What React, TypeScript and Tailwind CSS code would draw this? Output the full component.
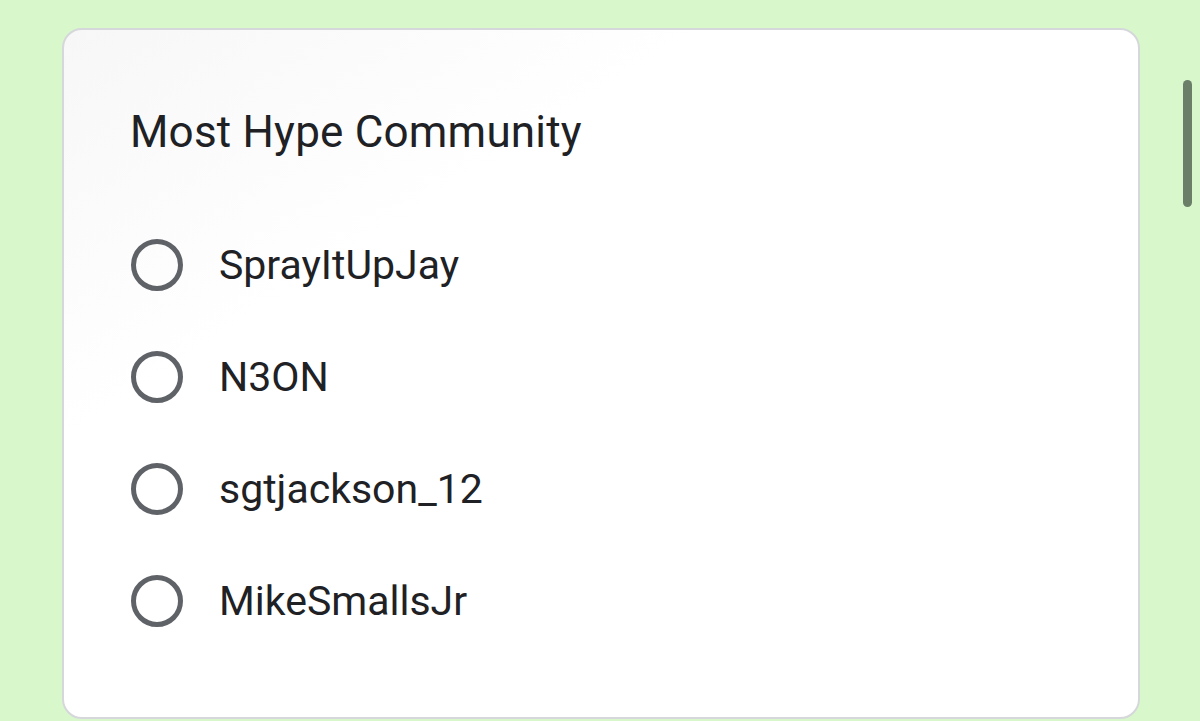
import React from "react";

const options = ["SprayItUpJay", "N3ON", "sgtjackson_12", "MikeSmallsJr"];

export default function App() {
  return (
    <div
      className="w-[1200px] h-[721px] bg-[#d8f8cc] overflow-hidden flex"
      style={{ fontFamily: "Roboto, 'Noto Sans', sans-serif" }}
    >
      <div className="ml-[62px] mt-[28px] w-[1078px] h-[691px] shrink-0 rounded-[20px] border-2 border-[#d6d7da] bg-white bg-gradient-to-br from-[#f7f7f7] via-white via-[30%] to-white pl-[66px] pt-[76px]">
        <h1 className="text-[44px] leading-[52px] text-[#202124] tracking-[0.2px]">
          Most Hype Community
        </h1>
        <div className="mt-[81px] flex flex-col gap-[60px] ml-[1px]">
          {options.map((o) => (
            <div key={o} className="flex items-center h-[52px]">
              <div className="w-[52px] h-[52px] rounded-full border-[5px] border-[#5f6368] shrink-0" />
              <span className="ml-[36px] text-[41px] leading-[52px] text-[#202124]">
                {o}
              </span>
            </div>
          ))}
        </div>
      </div>
      <div className="ml-[43px] mt-[80px] w-[9px] h-[127px] rounded-full bg-[#6b7e68] shrink-0" />
    </div>
  );
}
